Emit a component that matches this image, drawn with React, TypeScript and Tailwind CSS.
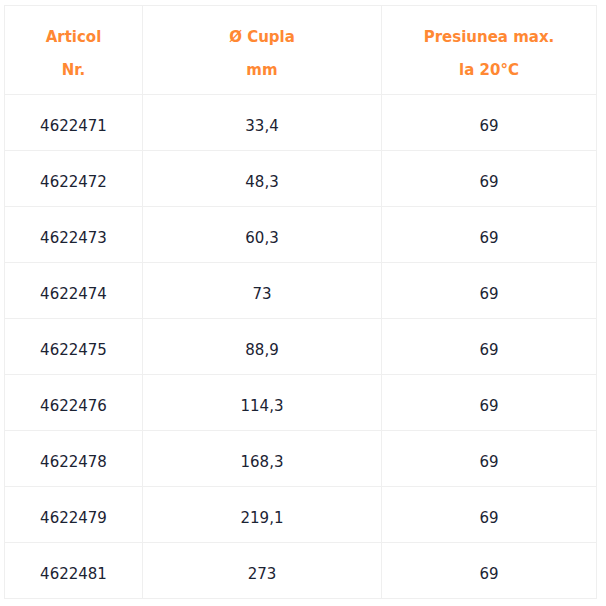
import React from 'react';

const rows: [string, string, string][] = [
  ['4622471', '33,4', '69'],
  ['4622472', '48,3', '69'],
  ['4622473', '60,3', '69'],
  ['4622474', '73', '69'],
  ['4622475', '88,9', '69'],
  ['4622476', '114,3', '69'],
  ['4622478', '168,3', '69'],
  ['4622479', '219,1', '69'],
  ['4622481', '273', '69'],
];

export default function App() {
  return (
    <div className="min-h-screen bg-white pt-[5px] pl-[4px]" style={{ fontFamily: '"DejaVu Sans", "Noto Sans", sans-serif' }}>
      <table className="border-collapse w-[592px] table-fixed">
        <colgroup>
          <col className="w-[138px]" />
          <col className="w-[239px]" />
          <col className="w-[215px]" />
        </colgroup>
        <thead>
          <tr className="h-[89px]">
            {[['Articol', 'Nr.'], ['Ø Cupla', 'mm'], ['Presiunea max.', 'la 20°C']].map(([a, b]) => (
              <th key={a} className="border border-[#efefef] text-center align-middle font-bold text-[15px] leading-[33px] text-[#ff8833] pt-[7px]">
                {a}
                <br />
                {b}
              </th>
            ))}
          </tr>
        </thead>
        <tbody>
          {rows.map(r => (
            <tr key={r[0]} className="h-[56px]">
              {r.map((c, i) => (
                <td key={i} className="border border-[#efefef] text-center align-middle text-[15px] text-[#1b2333] pt-[7px]">
                  {c}
                </td>
              ))}
            </tr>
          ))}
        </tbody>
      </table>
    </div>
  );
}
